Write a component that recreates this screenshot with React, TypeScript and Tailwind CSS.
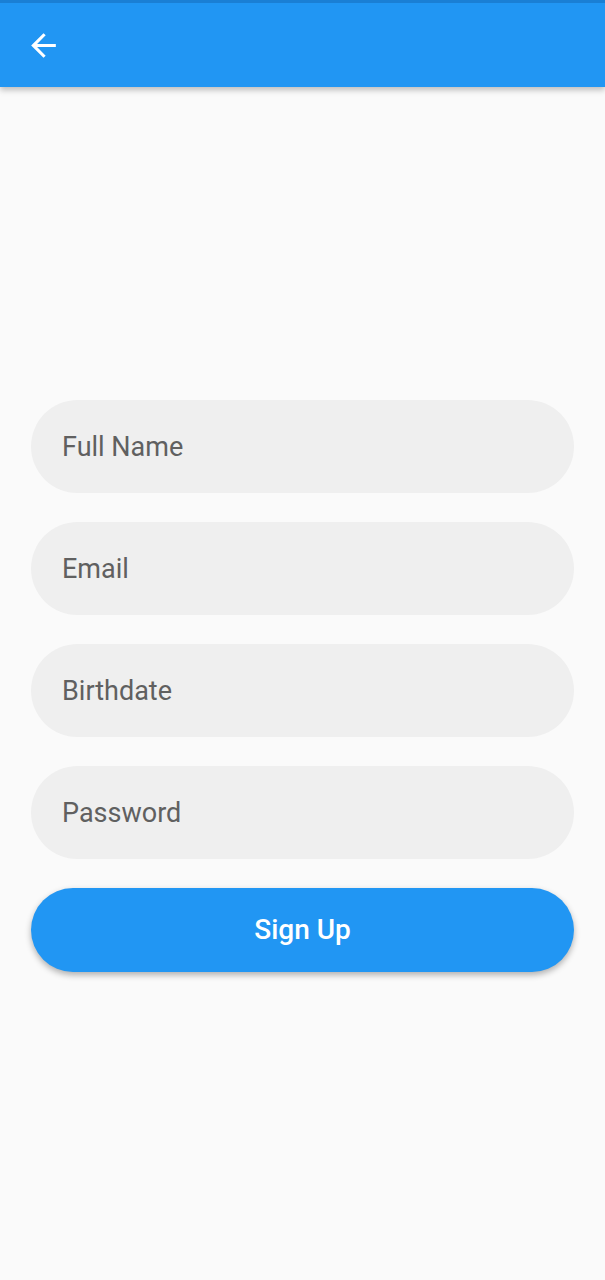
import { useState } from "react";

const fields = ["Full Name", "Email", "Birthdate", "Password"];

export default function App() {
  const [values, setValues] = useState<Record<string, string>>({});

  return (
    <div
      className="min-h-screen bg-[#fafafa]"
      style={{ fontFamily: "Roboto, 'Noto Sans', sans-serif" }}
    >
      {/* App bar */}
      <div className="relative z-10 h-[87px] bg-[#2196f3] border-t-[3px] border-[#1a7fd4] shadow-[0_3px_6px_rgba(0,0,0,0.25)] flex items-center px-[25px]">
        <button className="text-white">
          <svg width="37" height="37" viewBox="0 0 24 24" fill="currentColor">
            <path d="M20 11H7.83l5.59-5.59L12 4l-8 8 8 8 1.41-1.41L7.83 13H20v-2z" />
          </svg>
        </button>
      </div>

      {/* Form */}
      <div className="px-[31px] pt-[313px] flex flex-col gap-[29px]">
        {fields.map((f) => (
          <input
            key={f}
            type={f === "Password" ? "password" : "text"}
            placeholder={f}
            value={values[f] ?? ""}
            onChange={(e) => setValues({ ...values, [f]: e.target.value })}
            className="h-[93px] w-full rounded-full bg-[#efefef] px-[31px] text-[27px] text-[#606060] placeholder:text-[#606060] outline-none"
          />
        ))}
        <button className="h-[84px] w-full rounded-full bg-[#2196f3] text-white text-[28px] font-medium shadow-[0_3px_6px_rgba(0,0,0,0.3)]">
          Sign Up
        </button>
      </div>
    </div>
  );
}
